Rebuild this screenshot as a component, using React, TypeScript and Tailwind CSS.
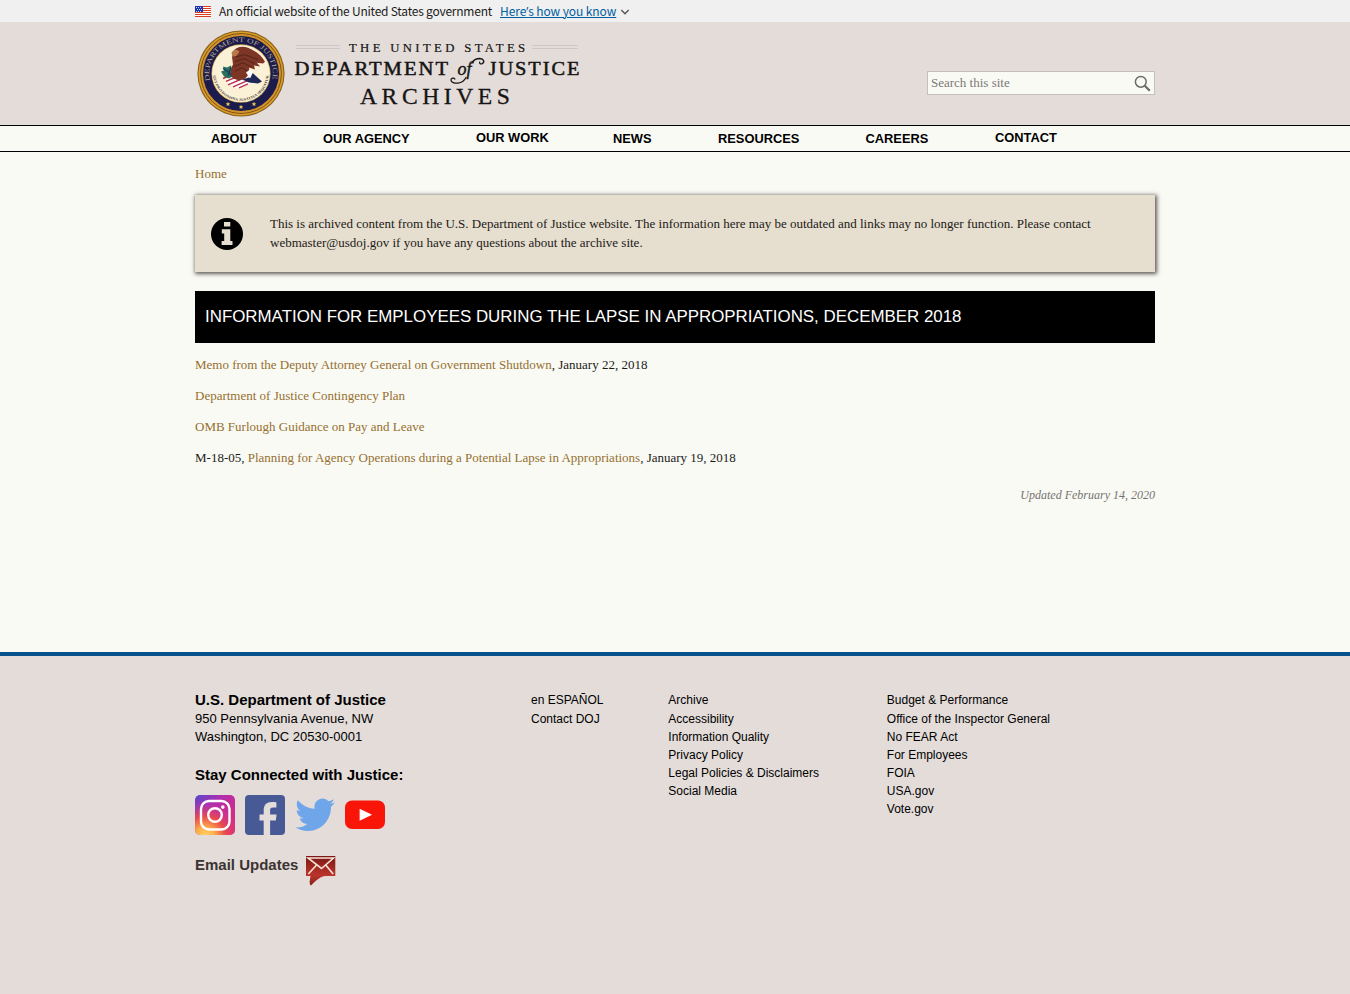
import React from "react";

const nav = [
  { label: "ABOUT", box: "w-28 pt-[3px]" },
  { label: "OUR AGENCY", box: "w-[153px] pt-[3px]" },
  { label: "OUR WORK", box: "w-[137px] pt-[2px]" },
  { label: "NEWS", box: "w-[105px] pt-[3px]" },
  { label: "RESOURCES", box: "w-[147.5px] pt-[3px]" },
  { label: "CAREERS", box: "w-[129.5px] pt-[3px]" },
  { label: "CONTACT", box: "w-[100px] pt-[2px]" },
];

const footerColumns = [
  { box: "w-[137.3px]", links: ["en ESPAÑOL", "Contact DOJ"] },
  {
    box: "w-[218.5px]",
    links: ["Archive", "Accessibility", "Information Quality", "Privacy Policy", "Legal Policies & Disclaimers", "Social Media"],
  },
  {
    box: "w-[200px]",
    links: ["Budget & Performance", "Office of the Inspector General", "No FEAR Act", "For Employees", "FOIA", "USA.gov", "Vote.gov"],
  },
];

function Flag() {
  return (
    <svg className="h-[11px] w-4" viewBox="0 0 16 11" shapeRendering="crispEdges">
      <rect width="16" height="11" fill="#fff" />
      {[0, 2, 4, 6, 8, 10].map((y) => (
        <rect key={y} y={y} width="16" height="1" fill="#db3e1f" />
      ))}
      <rect width="8" height="6" fill="#1e33b1" />
      {[1, 3, 5].map((y) =>
        [1, 3, 5].map((x) => <rect key={`${x}-${y}`} x={x + (y === 3 ? 1 : 0)} y={y - 0.3} width="1" height="0.8" fill="#c9d0f5" />)
      )}
    </svg>
  );
}

function Seal() {
  return (
    <svg className="h-[87px] w-[88px] shrink-0" viewBox="0 0 88 88" preserveAspectRatio="none">
      <defs>
        <path id="ringTop" d="M13.6 53.2 A31.8 31.8 0 1 1 74.4 53.2" />
        <path id="motto" d="M16.3 44 A27.7 27.7 0 0 0 71.7 44" />
      </defs>
      <circle cx="44" cy="44" r="43.6" fill="#85601f" />
      <circle cx="44" cy="44" r="42.5" fill="#d99d2a" />
      <circle cx="44" cy="44" r="40.4" fill="none" stroke="#7c4c13" strokeWidth="1" />
      <circle cx="44" cy="44" r="39.4" fill="#d0922a" />
      <circle cx="44" cy="44" r="38" fill="#1c1b4e" />
      <circle cx="44" cy="44" r="29.6" fill="#c9a343" />
      <circle cx="44" cy="44" r="28.9" fill="#fbf1d6" />
      <text fontFamily="Liberation Serif, serif" fontSize="6.8" fill="#b3a98c">
        <textPath href="#ringTop" textLength="113" lengthAdjust="spacingAndGlyphs" startOffset="2">DEPARTMENT OF JUSTICE</textPath>
      </text>
      <text fontFamily="Liberation Serif, serif" fontWeight="bold" fontSize="3.6" fill="#4a4034">
        <textPath href="#motto" textLength="83" lengthAdjust="spacingAndGlyphs" startOffset="2">QUI PRO DOMINA JUSTITIA SEQUITUR</textPath>
      </text>
      <path d="M29 50l14-5 8 3 2 7-12 4-8-3z" fill="#fff" />
      <path d="M26 49l12-5M29 52l14-6M31 55.5l17-7.5M36 57.5l14-6M42 58.5l9-4" stroke="#b8334c" strokeWidth="1.5" />
      <path d="M26 37l4 1 4-2 1 5 2 5-5 3-5-2-3-5 3-1z" fill="#28705f" />
      <path d="M26 39l6 4 3 4M34 38l-3 8" stroke="#153e62" fill="none" strokeWidth="1.2" />
      <path d="M36 22c3-5 9-6 15-4 7 3 13 7 17 14l-2 2-6-1 3 4-6-1 1 4-6-2c1 5-1 9-4 11l-6 2-6-2c-3-4-3-9 0-14l-1-8z" fill="#7d3525" />
      <path d="M39 27l9-2 13 5M38 32l9-3 11 5M37 37l9-4 9 5M38 42l7-4 6 4" stroke="#52241a" strokeWidth="1" fill="none" />
      <path d="M34.5 23c2-4 6-4 8-1l-3 4-4 1z" fill="#b77a4a" />
      <path d="M45 50l7-2 2-6 11 10-4 2-9-1z" fill="#202656" />
      <path d="M49 43l4-3 3 3-3 6z" fill="#fff" />
      {[31, 44, 57].map((x) => (
        <path key={x} transform={`translate(${x} ${x === 44 ? 78 : 75})`} d="M0-2.3l.7 1.5 1.6.1-1.3 1 .5 1.6L0 1l-1.5.9.5-1.6-1.3-1 1.6-.1z" fill="#e8c65c" />
      ))}
    </svg>
  );
}

function Wordmark() {
  return (
    <svg className="h-[76px] w-[300px]" viewBox="290 36 300 76" fontFamily="Liberation Serif, serif" fill="#161414">
      <path d="M296 45.5h44M296 48.5h44M532 45.5h46M532 48.5h46" stroke="#d0c6c3" strokeWidth="1" />
      <g stroke="#161414" strokeWidth=".2">
        <text x="349" y="52" fontSize="11.8" letterSpacing="3.1" textLength="179.5" lengthAdjust="spacingAndGlyphs">THE UNITED STATES</text>
        <text x="294.5" y="74.6" fontSize="19.6" strokeWidth=".5" letterSpacing="1.9" textLength="155.5" lengthAdjust="spacingAndGlyphs">DEPARTMENT</text>
        <text x="488.5" y="74.6" fontSize="19.6" strokeWidth=".5" letterSpacing="1.9" textLength="93" lengthAdjust="spacingAndGlyphs">JUSTICE</text>
        <text x="360" y="104" fontSize="23.8" strokeWidth=".3" letterSpacing="4.6" textLength="154.5" lengthAdjust="spacingAndGlyphs">ARCHIVES</text>
        <text x="457.5" y="74.5" fontSize="18" fontStyle="italic" strokeWidth=".4">of</text>
      </g>
      <path d="M471.800 63.200c1.500-2.900 4.500-4.700 8-4.700 4 .1 5.200 3.800 2.400 5.200-1.500.7-2.900-.2-2.600-1.500M466 77.500c-1.700 3.300-4.500 5.200-8 5.600-3.600.4-6.800-.7-7-2.800-.2-2.200 3-3 3.800-1.200" fill="none" stroke="#161414" strokeWidth="1.3" strokeLinecap="round" />
    </svg>
  );
}

function InfoIcon() {
  return (
    <svg className="h-8 w-8 shrink-0" viewBox="0 0 32 32">
      <circle cx="16" cy="16" r="16" fill="#000" />
      <path d="M13 4h6.300v4.600H13zM10.800 11.300h8.500v11.600h2.200v4.200H10.600v-4.200h2.600v-7.300h-2.400z" fill="#e6dece" />
    </svg>
  );
}

function Socials() {
  return (
    <div className="flex gap-2.5">
      <svg className="h-10 w-10" viewBox="0 0 40 40">
        <defs>
          <linearGradient id="igBase" x1="0" y1="0" x2="1" y2=".8">
            <stop stopColor="#5948c8" />
            <stop offset=".45" stopColor="#b52cae" />
            <stop offset="1" stopColor="#dc3073" />
          </linearGradient>
          <radialGradient id="igGlow" cx=".25" cy="1.05" r=".95">
            <stop stopColor="#ffd66b" />
            <stop offset=".25" stopColor="#ffb14a" />
            <stop offset=".55" stopColor="#ed4c45" stopOpacity=".9" />
            <stop offset="1" stopColor="#c52bae" stopOpacity="0" />
          </radialGradient>
        </defs>
        <rect width="40" height="40" rx="5" fill="url(#igBase)" />
        <rect width="40" height="40" rx="5" fill="url(#igGlow)" />
        <g fill="none" stroke="#fff" strokeWidth="2.4">
          <rect x="6" y="6" width="28.500" height="28.500" rx="8" />
          <circle cx="20" cy="20" r="6.800" />
        </g>
        <circle cx="27.800" cy="12.100" r="1.800" fill="#fff" />
      </svg>
      <svg className="h-10 w-10" viewBox="0 0 40 40">
        <rect width="40" height="40" rx="4" fill="#485a96" />
        <path d="M18.700 40V25.500H14.500v-6h4.200v-4.200c0-5.300 3-8.200 8-8.200 2.100 0 3.900.2 4.700.3v5.200h-3.300c-2.500 0-3 1.200-3 3v3.900h6.500l-.8 6h-5.700V40z" fill="#e3dcd9" />
      </svg>
      <svg className="h-10 w-10" viewBox="-.1 .1 24.1 24" fill="#6fa5e9">
        <path d="M23.95 4.57a10 10 0 01-2.82.77 4.96 4.96 0 002.16-2.72c-.95.55-2 .95-3.13 1.18a4.92 4.92 0 00-8.38 4.48C7.69 8.1 4.07 6.13 1.64 3.16a4.8 4.8 0 00-.67 2.47c0 1.71.87 3.21 2.19 4.1a4.9 4.9 0 01-2.23-.61v.06a4.92 4.92 0 003.95 4.83 5 5 0 01-2.21.08 4.94 4.94 0 004.6 3.42A9.87 9.87 0 010 19.54a14 14 0 007.55 2.21c9.05 0 14-7.5 14-13.99l-.02-.63a9.9 9.9 0 002.42-2.56z" />
      </svg>
      <svg className="h-10 w-10" viewBox="0 0 40 40">
        <rect y="5.500" width="40" height="28.500" rx="7" fill="#f91609" />
        <path d="M14.600 13.700l12.500 6-12.500 6z" fill="#fff" />
      </svg>
    </div>
  );
}

function EmailIcon() {
  return (
    <svg className="h-[30px] w-[30px]" viewBox="0 0 30 30">
      <defs>
        <linearGradient id="mailRed" x1="0" y1="0" x2="0" y2="1">
          <stop stopColor="#781913" />
          <stop offset=".65" stopColor="#bb352b" />
          <stop offset="1" stopColor="#852019" />
        </linearGradient>
      </defs>
      <path d="M0 0h29.300v20H19C13 21 9 25.500 5 29.500c-1.200-.8-1.500-2.500-1.300-4.200L4.500 20H0z" fill="url(#mailRed)" />
      <path d="M2 2h25.500L15.500 12.500zM2.300 18l8.300-9M27.200 18l-7.500-9" fill="none" stroke="#fae1d9" strokeWidth="1.600" />
    </svg>
  );
}

export default function App() {
  return (
    <div className="h-[994px] overflow-hidden bg-[#fafaf5] font-['Liberation_Serif',serif] text-[13px] text-[#1c1a18]">
      <div className="h-[22px] bg-[#f0f0f0]">
        <div className="mx-auto flex h-full w-[960px] items-center font-['Noto_Sans_CJK_SC',sans-serif] text-[12px] tracking-[-0.23px] whitespace-nowrap">
          <Flag />
          <span className="ml-2 w-[281px] leading-5">An official website of the United States government</span>
          <a className="leading-5 tracking-[-0.09px] text-[#005ea2] underline">
            Here<span className="font-['Open_Sans',sans-serif]">’</span>s how you know
          </a>
          <svg className="mt-0.5 ml-1 h-2 w-[10px]" viewBox="0 0 10 8" fill="none" stroke="#555" strokeWidth="1.4">
            <path d="M1.300 2l3.700 3.700L8.700 2" />
          </svg>
        </div>
      </div>
      <header className="h-[103px] bg-[#e3dcd9]">
        <div className="mx-auto flex w-[960px] items-start">
          <div className="flex items-start pt-2 pl-[1.5px]">
            <Seal />
            <div className="pt-1.5 pl-[5.5px]">
              <Wordmark />
            </div>
          </div>
          <div className="mt-[49px] ml-auto flex h-6 w-[228px] items-center justify-between border border-[#c3bfbb] bg-[#fafaf5] pr-[3px] pl-[3px] text-[#7b7977]">
            <span className="leading-4">Search this site</span>
            <svg className="h-[17px] w-[17px]" viewBox="0 0 17 17" fill="none" stroke="#6c6a69">
              <circle cx="6.800" cy="6.800" r="5.400" strokeWidth="1.500" />
              <path d="M10.800 10.800l5 5" strokeWidth="2.200" />
            </svg>
          </div>
        </div>
      </header>
      <nav className="h-[27px] border-y border-black">
        <div className="mx-auto flex w-[960px] pl-4 font-['Liberation_Sans',sans-serif] text-[12.85px] font-bold text-black">
          {nav.map((item) => (
            <a key={item.label} className={`${item.box} leading-5 whitespace-nowrap`}>
              {item.label}
            </a>
          ))}
        </div>
      </nav>
      <main className="mx-auto h-[500px] w-[960px] pt-3">
        <p className="leading-5 text-[#95702f]">Home</p>
        <div className="mt-[11px] flex h-[77px] items-center bg-[#e6dece] pl-4 shadow-[1px_1px_4px_1px_#5f5b55]">
          <InfoIcon />
          <p className="mb-0.5 ml-[27px] w-[850px] leading-[19px]">
            This is archived content from the U.S. Department of Justice website. The information here may be outdated and links may no longer function. Please contact webmaster@usdoj.gov if you have any questions about the archive site.
          </p>
        </div>
        <h1 className="mt-[19px] flex h-[52px] items-center bg-black pl-2.5 font-['Liberation_Sans',sans-serif] text-[16.9px] text-white">
          INFORMATION FOR EMPLOYEES DURING THE LAPSE IN APPROPRIATIONS, DECEMBER 2018
        </h1>
        <div className="flex flex-col gap-[11px] pt-3 leading-5">
          <p><a className="text-[#95702f]">Memo from the Deputy Attorney General on Government Shutdown</a>, January 22, 2018</p>
          <p><a className="text-[#95702f]">Department of Justice Contingency Plan</a></p>
          <p><a className="text-[#95702f]">OMB Furlough Guidance on Pay and Leave</a></p>
          <p>M-18-05, <a className="text-[#95702f]">Planning for Agency Operations during a Potential Lapse in Appropriations</a>, January 19, 2018</p>
        </div>
        <p className="mt-[17px] text-right text-[12px] leading-5 text-[#747270] italic">Updated February 14, 2020</p>
      </main>
      <footer className="h-[342px] border-t-4 border-[#07528b] bg-[#e3dcd9] font-['Liberation_Sans',sans-serif] text-black">
        <div className="mx-auto flex w-[960px] pt-[35px]">
          <div className="w-[336px]">
            <p className="h-[19px] text-[15px] leading-[18px] font-bold">U.S. Department of Justice</p>
            <p className="leading-[18px]">950 Pennsylvania Avenue, NW</p>
            <p className="leading-[18px]">Washington, DC 20530-0001</p>
            <p className="mt-5 mb-[11px] text-[15px] leading-[18px] font-bold">Stay Connected with Justice:</p>
            <Socials />
            <div className="mt-[21px] flex gap-2">
              <span className="text-[15px] leading-[18px] font-bold text-[#3c3332]">Email Updates</span>
              <EmailIcon />
            </div>
          </div>
          {footerColumns.map((column) => (
            <ul key={column.links[0]} className={`${column.box} text-[12px] leading-[18px]`}>
              {column.links.map((link, index) => (
                <li key={link} className={index === 0 ? "h-[19px]" : ""}>{link}</li>
              ))}
            </ul>
          ))}
        </div>
      </footer>
    </div>
  );
}
